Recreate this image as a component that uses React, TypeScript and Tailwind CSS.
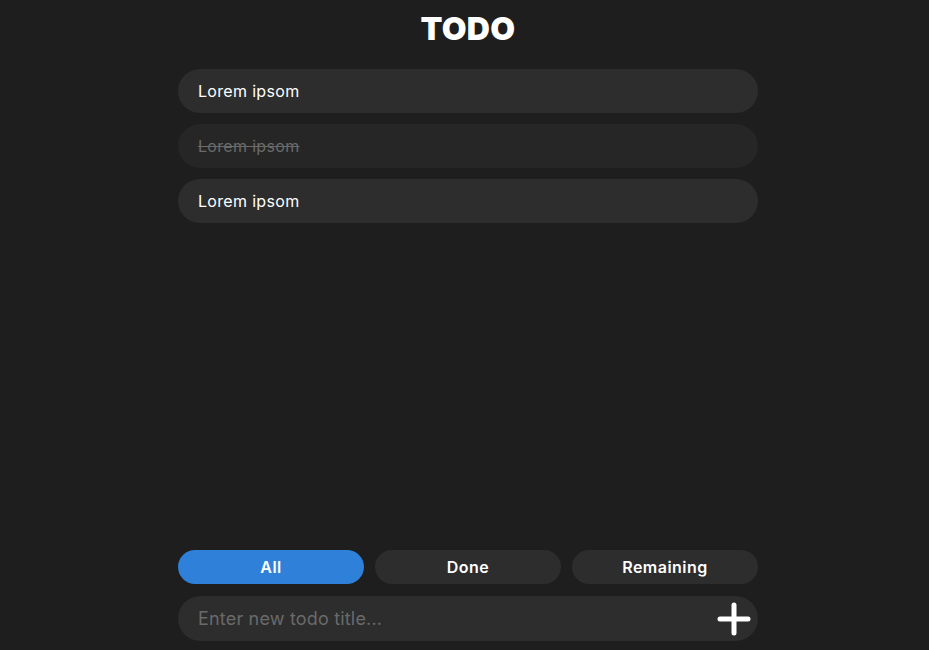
import { useState } from "react";

type Todo = { id: number; title: string; done: boolean };

const initialTodos: Todo[] = [
  { id: 1, title: "Lorem ipsom", done: false },
  { id: 2, title: "Lorem ipsom", done: true },
  { id: 3, title: "Lorem ipsom", done: false },
];

const filters = ["All", "Done", "Remaining"];

const App = () => {
  const [todos] = useState(initialTodos);
  const [filter, setFilter] = useState("All");

  return (
    <div className="h-screen bg-[#1e1e1e] flex flex-col items-center pb-[9px] pl-[7px] font-['Inter',_'Noto_Sans',_sans-serif]">
      <h1 className="text-white text-[32px] font-black tracking-[0.01em] leading-none mt-[10px] h-[37px] flex items-center">
        TODO
      </h1>

      <div className="flex-1 w-[580px] flex flex-col gap-[11px] mt-[22px]">
        {todos.map(todo => (
          <div
            key={todo.id}
            className={
              todo.done
                ? "h-[44px] rounded-full bg-[#262626] px-5 flex items-center text-[16px] tracking-[0.02em] text-[#6a6a6a] line-through"
                : "h-[44px] rounded-full bg-[#2d2d2d] px-5 flex items-center text-[16px] tracking-[0.02em] text-white"
            }
          >
            {todo.title}
          </div>
        ))}
      </div>

      <div className="w-[580px] grid grid-cols-3 gap-[11px]">
        {filters.map(f => (
          <button
            key={f}
            onClick={() => setFilter(f)}
            className={
              filter === f
                ? "h-[34px] rounded-full bg-[#2e80d8] text-white text-[16px] tracking-[0.03em] font-semibold"
                : "h-[34px] rounded-full bg-[#2d2d2d] text-white text-[16px] tracking-[0.03em] font-semibold"
            }
          >
            {f}
          </button>
        ))}
      </div>

      <div className="w-[580px] h-[45px] mt-[12px] rounded-full bg-[#2d2d2d] flex items-center pl-5 pr-[6px]">
        <input
          className="flex-1 bg-transparent outline-none text-[18px] tracking-[0.01em] text-white placeholder:text-[#6a6a6a]"
          placeholder="Enter new todo title..."
        />
        <button className="w-[36px] h-[36px] flex items-center justify-center">
          <svg width="36" height="36" viewBox="0 0 36 36">
            <path d="M18 4v28M4 18h28" stroke="white" strokeWidth="5" strokeLinecap="round" />
          </svg>
        </button>
      </div>
    </div>
  );
};

export default App;
